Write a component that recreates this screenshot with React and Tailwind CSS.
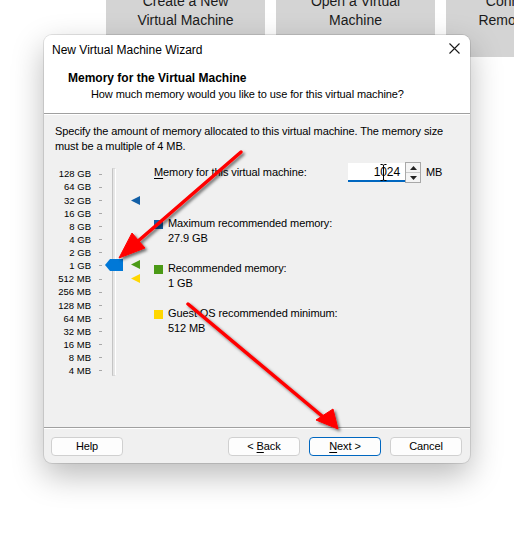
import React from "react";

const scale = ["128 GB","64 GB","32 GB","16 GB","8 GB","4 GB","2 GB","1 GB","512 MB","256 MB","128 MB","64 MB","32 MB","16 MB","8 MB","4 MB"];

function LeftTri({ color, className }) {
  return (
    <svg width="9" height="9" viewBox="0 0 9 9" className={className}>
      <polygon points="0,4.5 9,0 9,9" fill={color} />
    </svg>
  );
}

function Legend({ color, title, value }) {
  return (
    <div className="flex">
      <div className={`w-[9px] h-[9px] mt-[4px] ${color}`} />
      <div className="ml-[5px] leading-[15px]">
        <div>{title}</div>
        <div>{value}</div>
      </div>
    </div>
  );
}

function Btn({ children, primary }) {
  return (
    <div className={`w-[72px] h-[19px] rounded-[4px] border flex items-center justify-center bg-[#fdfdfd] ${primary ? "border-[#0067c0]" : "border-[#d0d0d0]"}`}>
      <span className="whitespace-pre">{children}</span>
    </div>
  );
}

export default function App() {
  return (
    <div className="relative w-[514px] h-[538px] overflow-hidden bg-white font-['Liberation_Sans',Arial,sans-serif] text-black">
      {/* background launcher buttons */}
      <div className="flex pl-[106px] gap-[11px]">
        {[["Create a New", "Virtual Machine"], ["Open a Virtual", "Machine"], ["Connect to a", "Remote Server"]].map((t, i) => (
          <div key={i} className="w-[159px] shrink-0 h-[57px] bg-[#d4d4d4] text-[14px] leading-[19px] text-center text-[#1a1a1a] overflow-hidden">
            <div className="-mt-[8px]">
              <div>{t[0]}</div>
              <div>{t[1]}</div>
            </div>
          </div>
        ))}
      </div>

      {/* dialog window */}
      <div className="absolute left-[44px] top-[35px] w-[426px] h-[428px] rounded-[8px] bg-[#f0f0f0] overflow-hidden flex flex-col shadow-[0_0_0_1px_rgba(0,0,0,0.10),0_12px_32px_rgba(0,0,0,0.28)]">
        {/* title bar */}
        <div className="h-[29px] bg-white flex items-center justify-between pl-[8px] pr-[10px] text-[12px] shrink-0">
          <span>New Virtual Machine Wizard</span>
          <svg width="11" height="11" viewBox="0 0 11 11" className="-mt-[2px]">
            <path d="M0.5 0.5 L10.5 10.5 M10.5 0.5 L0.5 10.5" stroke="#1a1a1a" strokeWidth="1.1" />
          </svg>
        </div>
        {/* header */}
        <div className="h-[50px] bg-white border-b border-[#a0a0a0] pt-[7px] shrink-0">
          <div className="pl-[24px] text-[12px] font-bold leading-[15px]">Memory for the Virtual Machine</div>
          <div className="pl-[47px] mt-[1px] text-[11px] tracking-[-0.1px] leading-[15px]">How much memory would you like to use for this virtual machine?</div>
        </div>
        {/* body */}
        <div className="flex-1 flex flex-col text-[11px] tracking-[-0.1px] border-t border-white">
          <div className="pl-[11px] pt-[9px] leading-[15px]">
            <div>Specify the amount of memory allocated to this virtual machine. The memory size</div>
            <div>must be a multiple of 4 MB.</div>
          </div>
          <div className="flex mt-[7px] pl-[11px]">
            {/* slider column */}
            <div className="relative w-[100px] h-[224px] shrink-0">
              <div className="pt-[6.5px] flex flex-col">
                {scale.map((s) => (
                  <div key={s} className="h-[13.13px] flex items-center">
                    <div className="w-[36px] text-right text-[9.5px] tracking-normal leading-none">{s}</div>
                    <div className="ml-[8px] w-[3px] h-px bg-[#a8a8a8]" />
                  </div>
                ))}
              </div>
              <div className="absolute left-[57px] top-[7px] w-[4px] h-[208px] border-l border-[#c4c4c4] border-r border-r-white border-y border-y-[#d8d8d8] bg-[#e6e6e6]" />
              <svg width="18" height="12" viewBox="0 0 18 12" className="absolute left-[50px] top-[98px]">
                <polygon points="0,6 5,0 18,0 18,12 5,12" fill="#0078d7" />
              </svg>
              <LeftTri color="#125fa6" className="absolute left-[76px] top-[34.5px]" />
              <LeftTri color="#4b9a16" className="absolute left-[76px] top-[99px]" />
              <LeftTri color="#ffd700" className="absolute left-[76px] top-[113px]" />
            </div>
            {/* right column */}
            <div className="flex-1 flex flex-col -ml-[1px]">
              <div className="flex items-center h-[19px] mt-[2px]">
                <div className="w-[194px] leading-[15px]"><u className="underline-offset-2">M</u>emory for this virtual machine:</div>
                <div className="relative w-[57px] h-[19px] bg-white border-b-2 border-[#0067c0] flex items-center justify-end pr-[5px] text-[12px]">
                  1024
                  <svg width="7" height="17" viewBox="0 0 7 17" className="absolute left-[32px] top-[1px]">
                    <path d="M0.5 0.5 H2.5 Q3.5 0.5 3.5 2 V15 Q3.5 16.5 2.5 16.5 H0.5 M6.5 0.5 H4.5 Q3.5 0.5 3.5 2 M3.5 15 Q3.5 16.5 4.5 16.5 H6.5" stroke="#000" strokeWidth="1" fill="none" />
                  </svg>
                </div>
                <div className="w-[16px] h-[21px] border border-[#a8a8a8] bg-[#f4f4f4] flex flex-col">
                  <div className="flex-1 flex items-center justify-center border-b border-[#c8c8c8]">
                    <svg width="7" height="4" viewBox="0 0 7 4"><polygon points="0,4 3.5,0 7,4" fill="#222" /></svg>
                  </div>
                  <div className="flex-1 flex items-center justify-center">
                    <svg width="7" height="4" viewBox="0 0 7 4"><polygon points="0,0 7,0 3.5,4" fill="#222" /></svg>
                  </div>
                </div>
                <div className="ml-[5px]">MB</div>
              </div>
              <div className="mt-[33.5px] flex flex-col gap-[15px]">
                <Legend color="bg-[#125fa6]" title="Maximum recommended memory:" value="27.9 GB" />
                <Legend color="bg-[#4b9a16]" title="Recommended memory:" value="1 GB" />
                <Legend color="bg-[#ffd700]" title="Guest OS recommended minimum:" value="512 MB" />
              </div>
            </div>
          </div>
          {/* footer */}
          <div className="mt-auto border-t border-[#a0a0a0] shrink-0">
            <div className="border-t border-white h-[35px] pt-[8px] pl-[7px] pr-[8px] flex">
              <Btn>Help</Btn>
              <div className="ml-auto flex gap-[9px]">
                <Btn>{"< "}<u className="underline-offset-2">B</u>ack</Btn>
                <Btn primary><u className="underline-offset-2">N</u>{"ext >"}</Btn>
                <Btn>Cancel</Btn>
              </div>
            </div>
          </div>
        </div>
      </div>

      {/* annotation arrows */}
      <svg width="514" height="538" viewBox="0 0 514 538" className="absolute inset-0 pointer-events-none">
        <defs>
          <filter id="sh" x="-20%" y="-20%" width="140%" height="140%">
            <feDropShadow dx="2" dy="2" stdDeviation="1.6" floodColor="#000" floodOpacity="0.55" />
          </filter>
        </defs>
        <g filter="url(#sh)" fill="#ff0000" stroke="#ff0000">
          <line x1="241" y1="152" x2="137" y2="242" strokeWidth="3.5" strokeLinecap="round" />
          <polygon points="119,258 145,248 132,233" strokeWidth="1" strokeLinejoin="round" />
          <line x1="188" y1="304" x2="322" y2="416" strokeWidth="3.5" strokeLinecap="round" />
          <polygon points="338,429 333,409 316,420" strokeWidth="1" strokeLinejoin="round" />
        </g>
      </svg>
    </div>
  );
}
